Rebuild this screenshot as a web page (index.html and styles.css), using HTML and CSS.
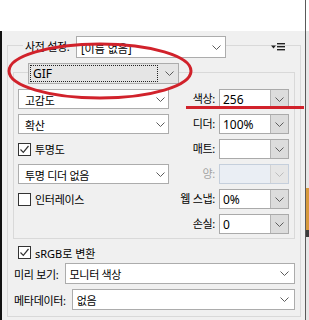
FILE: index.html
```html
<!DOCTYPE html>
<html lang="ko">

<head>
    <meta charset="UTF-8">
    <title>웹용으로 저장</title>
    <link rel="stylesheet" href="styles.css">
</head>

<body>
    <div class="window">
        <div class="titlebar"></div>

        <div class="panel">
            <div class="group outer">
                <div class="group-head">
                    <span class="head-label">사전 설정:</span>
                    <div class="combo preset">
                        <span class="val">[이름 없음]</span>
                        <svg class="chev" width="9" height="5" viewBox="0 0 9 5"><path d="M0.5 0.5 L4.5 4.5 L8.5 0.5" /></svg>
                    </div>
                    <svg class="menu-icon" width="14" height="8" viewBox="0 0 14 8">
                        <path d="M0 2.5 H5 L2.5 5.5 Z" fill="#222" />
                        <rect x="6" y="0" width="8" height="1.4" fill="#222" />
                        <rect x="6" y="3" width="8" height="1.4" fill="#222" />
                        <rect x="6" y="6" width="8" height="1.4" fill="#222" />
                    </svg>
                </div>

                <div class="group inner">
                    <div class="group-head">
                        <div class="combo format">
                            <span class="focus">GIF</span>
                            <svg class="chev" width="9" height="5" viewBox="0 0 9 5"><path d="M0.5 0.5 L4.5 4.5 L8.5 0.5" /></svg>
                        </div>
                    </div>

                    <div class="opts">
                        <div class="combo list"><span class="val">고감도</span><svg class="chev" width="9" height="5" viewBox="0 0 9 5"><path d="M0.5 0.5 L4.5 4.5 L8.5 0.5" /></svg></div>
                        <span class="opt-label">색상:</span>
                        <div class="combo edit"><span class="val num">256</span><span class="btn"><svg class="chev" width="9" height="5" viewBox="0 0 9 5"><path d="M0.5 0.5 L4.5 4.5 L8.5 0.5" /></svg></span></div>

                        <div class="combo list"><span class="val">확산</span><svg class="chev" width="9" height="5" viewBox="0 0 9 5"><path d="M0.5 0.5 L4.5 4.5 L8.5 0.5" /></svg></div>
                        <span class="opt-label">디더:</span>
                        <div class="combo edit"><span class="val num">100%</span><span class="btn"><svg class="chev" width="9" height="5" viewBox="0 0 9 5"><path d="M0.5 0.5 L4.5 4.5 L8.5 0.5" /></svg></span></div>

                        <div class="check-row"><span class="box checked"><svg width="11" height="11" viewBox="0 0 11 11"><path d="M1.5 5.5 L4.3 8.3 L9.5 2" /></svg></span>투명도</div>
                        <span class="opt-label">매트:</span>
                        <div class="combo edit"><span class="val"></span><span class="btn"><svg class="chev" width="9" height="5" viewBox="0 0 9 5"><path d="M0.5 0.5 L4.5 4.5 L8.5 0.5" /></svg></span></div>

                        <div class="combo list"><span class="val">투명 디더 없음</span><svg class="chev" width="9" height="5" viewBox="0 0 9 5"><path d="M0.5 0.5 L4.5 4.5 L8.5 0.5" /></svg></div>
                        <span class="opt-label disabled">양:</span>
                        <div class="combo edit disabled"><span class="val"></span><span class="btn"><svg class="chev" width="9" height="5" viewBox="0 0 9 5"><path d="M0.5 0.5 L4.5 4.5 L8.5 0.5" /></svg></span></div>

                        <div class="check-row"><span class="box"></span>인터레이스</div>
                        <span class="opt-label">웹 스냅:</span>
                        <div class="combo edit"><span class="val num">0%</span><span class="btn"><svg class="chev" width="9" height="5" viewBox="0 0 9 5"><path d="M0.5 0.5 L4.5 4.5 L8.5 0.5" /></svg></span></div>

                        <div></div>
                        <span class="opt-label">손실:</span>
                        <div class="combo edit"><span class="val num">0</span><span class="btn"><svg class="chev" width="9" height="5" viewBox="0 0 9 5"><path d="M0.5 0.5 L4.5 4.5 L8.5 0.5" /></svg></span></div>
                    </div>
                </div>

                <div class="check-row srgb"><span class="box checked"><svg width="11" height="11" viewBox="0 0 11 11"><path d="M1.5 5.5 L4.3 8.3 L9.5 2" /></svg></span>sRGB로 변환</div>

                <div class="field-row">
                    <span class="field-label">미리 보기:</span>
                    <div class="combo field"><span class="val">모니터 색상</span><svg class="chev" width="9" height="5" viewBox="0 0 9 5"><path d="M0.5 0.5 L4.5 4.5 L8.5 0.5" /></svg></div>
                </div>
                <div class="field-row">
                    <span class="field-label">메타데이터:</span>
                    <div class="combo field"><span class="val">없음</span><svg class="chev" width="9" height="5" viewBox="0 0 9 5"><path d="M0.5 0.5 L4.5 4.5 L8.5 0.5" /></svg></div>
                </div>
            </div>
        </div>
    </div>

    <!-- red pen marks drawn over the dialog -->
    <svg class="marks" width="309" height="320" viewBox="0 0 309 320">
        <ellipse cx="100" cy="71" rx="91" ry="27" />
        <rect x="186" y="106" width="118" height="3" />
    </svg>
</body>

</html>
```

FILE: styles.css
```css
* {
    box-sizing: border-box;
}

body {
    margin: 0;
    width: 309px;
    height: 320px;
    overflow: hidden;
    position: relative;
    font-family: "Noto Sans", "Noto Sans CJK KR", sans-serif;
    font-size: 11px;
    letter-spacing: -0.3px;
    color: #000;
    background: linear-gradient(#fff 0 31px, #e6e6e6 31px 188px, #d89a3e 188px 230px, #3c3c3c 230px 237px, #e6e6e6 237px);
}

.window {
    width: 306px;
    height: 320px;
    border-right: 1px solid #5a5a5a;
    background: #f0f0f0;
}

.titlebar {
    height: 31px;
    background: #fff;
}

.panel {
    height: 289px;
    border-left: 2px solid #111;
    padding: 14px 0 0 5px;
}

.group {
    border: 1px solid #d9d9d9;
}

.outer {
    width: 294px;
    height: 272px;
}

.group-head {
    display: flex;
    align-items: center;
    margin-top: -10px;
}

.outer > .group-head {
    height: 22px;
    padding-left: 15px;
}

.head-label {
    width: 53px;
    padding-left: 2px;
    background: #f0f0f0;
    line-height: 16px;
    white-space: nowrap;
}

.menu-icon {
    margin-left: auto;
    margin-right: 15px;
}

/* combo boxes */
.combo {
    display: flex;
    align-items: center;
    background: #fff;
    border: 1px solid #acacac;
}

.combo .val {
    flex: 1;
    white-space: nowrap;
    padding-top: 1px;
}

.chev path {
    fill: none;
    stroke: #5c5c5c;
    stroke-width: 1;
}

.preset {
    width: 150px;
    height: 22px;
    padding-left: 4px;
}

.preset .val {
    letter-spacing: 0;
}

.preset .chev {
    margin-right: 4px;
}

.inner {
    margin: 14px 5px 0 5px;
    width: 282px;
    padding-bottom: 4px;
}

.inner > .group-head {
    height: 21px;
    padding-left: 14px;
}

.format {
    width: 151px;
    height: 21px;
    background: #e5e5e5;
}

.format .focus {
    width: 128px;
    height: 17px;
    margin-left: 1px;
    padding-left: 2px;
    border: 1px dotted #222;
    font-size: 12px;
    line-height: 15px;
    letter-spacing: 0;
}

.format .chev {
    margin-left: 7px;
}

.opts {
    display: grid;
    grid-template-columns: 151px 50px 70px;
    grid-template-rows: repeat(6, 20px);
    row-gap: 5px;
    margin-top: 5px;
    padding-left: 4px;
}

.list {
    height: 20px;
    padding-left: 6px;
}

.list .chev {
    margin-right: 3px;
}

.opt-label {
    text-align: right;
    padding-right: 4px;
    line-height: 20px;
    white-space: nowrap;
}

.opt-label.disabled {
    color: #a3a3a3;
}

.edit {
    height: 20px;
    border-color: #aaaaaa;
}

.edit .val {
    padding-left: 3px;
}

.num {
    font-size: 12px;
    letter-spacing: 0;
}

.edit .btn {
    width: 18px;
    height: 18px;
    display: flex;
    align-items: center;
    justify-content: center;
    background: #dcdcdc;
    border-left: 1px solid #b4b4b4;
}

.edit.disabled {
    background: #eaeef4;
    border-color: #c5cfdc;
}

.edit.disabled .btn {
    background: #e6e6e6;
    border-left-color: #d2d2d2;
}

.edit.disabled .chev path {
    stroke: #bdbdbd;
}

/* check boxes */
.check-row {
    display: flex;
    align-items: center;
    gap: 4px;
}

.box {
    width: 13px;
    height: 13px;
    display: flex;
    align-items: center;
    justify-content: center;
    background: #fff;
    border: 1px solid #333;
}

.box path {
    fill: none;
    stroke: #333;
    stroke-width: 1.2;
}

.srgb {
    margin-top: 7px;
    padding-left: 10px;
    height: 13px;
    letter-spacing: 0;
}

.field-row {
    display: flex;
    align-items: center;
    gap: 6px;
    margin-top: 4px;
    padding-left: 6px;
    margin-right: 5px;
}

.field-row + .field-row {
    margin-top: 5px;
}

.field-label {
    white-space: nowrap;
}

.field {
    flex: 1;
    height: 21px;
    padding-left: 4px;
}

.field .chev {
    margin-right: 5px;
}

/* annotation overlay */
.marks {
    position: absolute;
    top: 0;
    left: 0;
    pointer-events: none;
}

.marks ellipse {
    fill: none;
    stroke: #d1222b;
    stroke-width: 3;
}

.marks rect {
    fill: #d1222b;
}
```
